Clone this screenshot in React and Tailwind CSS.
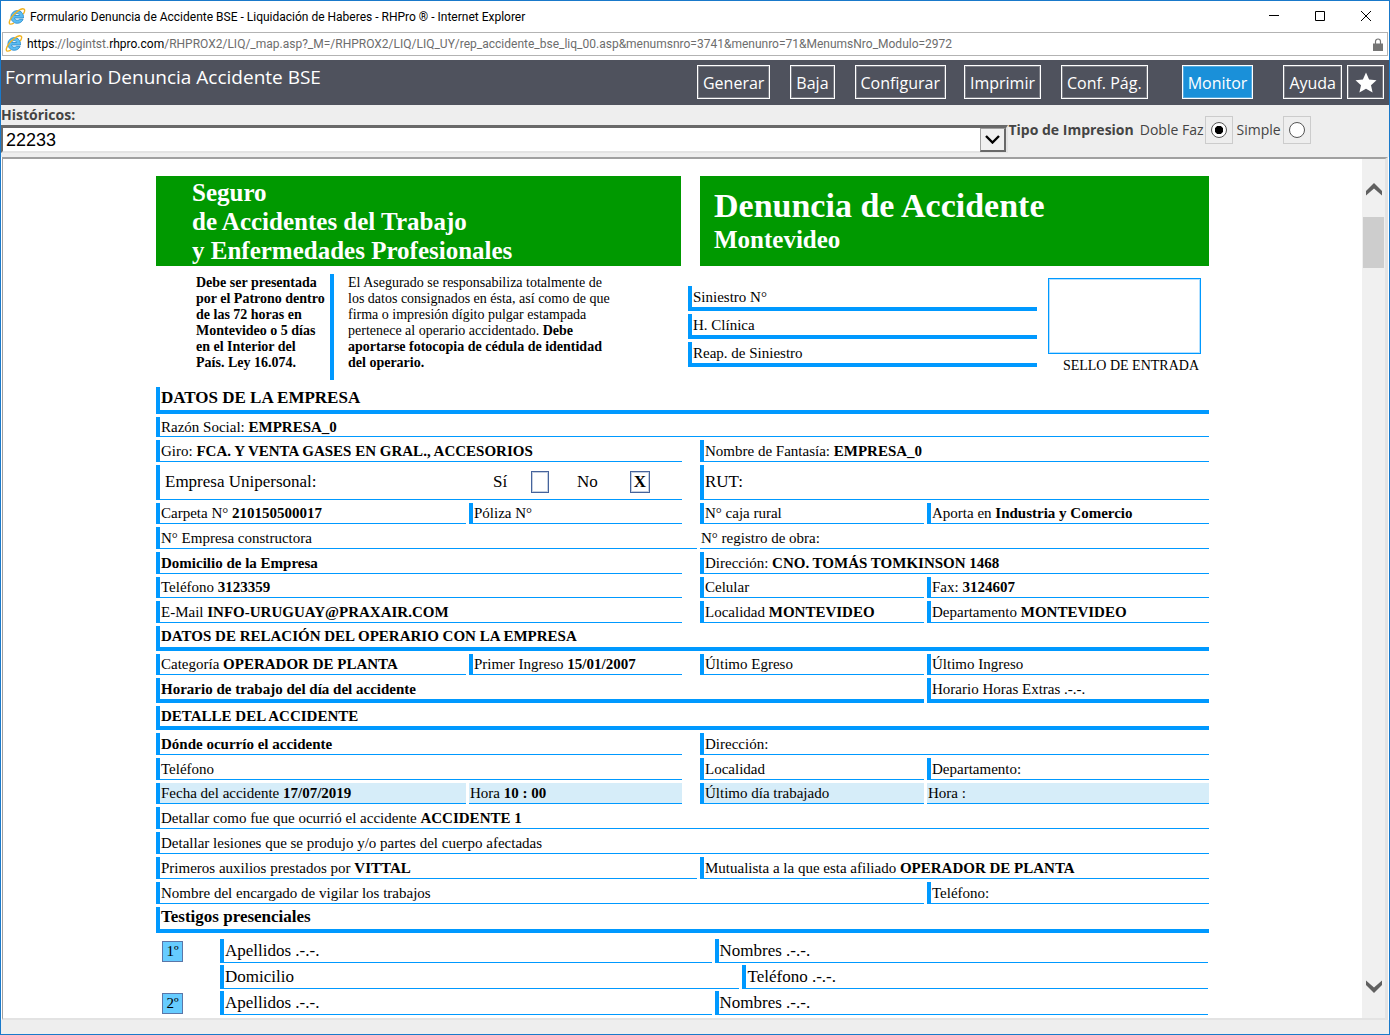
import React from "react";

const SERIF = "font-['Liberation_Serif','Times_New_Roman',serif]";
const cols = "grid grid-cols-[310fr_228fr_224fr_282fr] gap-x-[3px]";

const spans = { 1: "col-span-1", 2: "col-span-2", 3: "col-span-3", 4: "col-span-4" };

function Cell({ span = 1, inset, thick, plain, fill, className = "", children }) {
  return (
    <div
      className={`flex min-w-0 items-center whitespace-pre border-[#0099ff] ${spans[span]} ${
        inset ? "mr-[15px]" : ""
      } ${thick ? "border-b-4" : "border-b"} ${plain ? "pl-px" : "border-l-4 pl-px"} ${
        fill ? "bg-[#d6edf9]" : ""
      } ${className}`}
    >
      {children}
    </div>
  );
}

function Row({ h = "h-[22px]", children }) {
  return <div className={`${cols} ${h}`}>{children}</div>;
}

function ExplorerIcon() {
  return (
    <svg width="18" height="18" viewBox="0 0 18 18" className="shrink-0" aria-hidden="true">
      <path
        d="M9.200 2.600a6.300 6.300 0 0 0-6.300 6.500c0 3.500 2.800 6.200 6.300 6.200 2.800 0 5-1.600 5.900-4h-3.700c-.5.600-1.200.9-2.200.9-1.500 0-2.500-.8-2.600-2.200h8.900c.3-4.300-2.300-7.400-6.300-7.400zM6.700 7.500c.2-1.100 1.100-1.900 2.500-1.900s2.300.8 2.400 1.900z"
        fill="#5cbcf0"
        stroke="#2388cb"
        strokeWidth=".8"
      />
      <path
        d="M15.200 6.200c1.500-2.400 1.800-4.400.8-5.100-1.300-.8-4.200.4-7 2.700C5.500 6.600 2.300 10.500 1.500 13.400c-.8 2.900.9 3.600 4.300 1.700"
        fill="none"
        stroke="#f0b323"
        strokeWidth="1.400"
      />
    </svg>
  );
}

function ToolButton({ className = "", children, ...rest }) {
  return (
    <button
      type="button"
      className={`h-[34px] border border-white px-[5px] pt-0.5 text-base leading-none text-white outline outline-1 -outline-offset-2 outline-white/25 ${className}`}
      {...rest}
    >
      {children}
    </button>
  );
}

function MarkBox({ mark, className }) {
  return (
    <span
      className={`flex h-[22px] items-center justify-center border border-[#45639c] font-bold outline outline-1 -outline-offset-2 outline-[#c5cfe0] ${className}`}
    >
      {mark}
    </span>
  );
}

function WitnessMark({ children }) {
  return (
    <div className="ml-1.5 flex h-[21px] w-[21px] items-center justify-center self-center border border-[#5b76a8] bg-[#66ccff] text-[15px]">
      {children}
    </div>
  );
}

function WitnessRow({ mark, first, second, grid }) {
  return (
    <div className="flex h-6 pr-px text-[17px]">
      <div className="flex w-16 shrink-0">{mark && <WitnessMark>{mark}</WitnessMark>}</div>
      <div className={`grid flex-1 gap-x-[3px] ${grid}`}>
        <Cell>{first}</Cell>
        <Cell>{second}</Cell>
      </div>
    </div>
  );
}

function ClaimLine({ children }) {
  return (
    <div className="flex h-[25px] items-center border-b-4 border-l-4 border-[#0099ff] pl-px">
      {children}
    </div>
  );
}

export default function App() {
  return (
    <div className="flex h-screen flex-col overflow-hidden border border-[#1979ca] bg-white font-['Open_Sans',sans-serif]">
      <div className="flex h-[31px] shrink-0 items-center justify-between pl-[7px] font-['Roboto',sans-serif]">
        <div className="flex items-center gap-1 text-xs text-black">
          <ExplorerIcon />
          <span>Formulario Denuncia de Accidente BSE - Liquidación de Haberes - RHPro ® - Internet Explorer</span>
        </div>
        <div className="flex text-black">
          <button type="button" aria-label="Minimizar" className="flex w-[46px] justify-center">
            <svg width="12" height="12" viewBox="0 0 12 12" stroke="currentColor"><path d="M1 4.500h10" /></svg>
          </button>
          <button type="button" aria-label="Maximizar" className="flex w-[46px] justify-center">
            <svg width="12" height="12" viewBox="0 0 12 12" fill="none" stroke="currentColor"><path d="M1.500.5h9v9h-9z" /></svg>
          </button>
          <button type="button" aria-label="Cerrar" className="flex w-[46px] justify-center">
            <svg width="12" height="12" viewBox="0 0 12 12" stroke="currentColor"><path d="M1 0l10 10M11 0L1 10" /></svg>
          </button>
        </div>
      </div>

      <div className="mx-px flex h-6 shrink-0 items-center gap-1 border border-[#b3b3b3] pl-0.5 pr-1 font-['Roboto',sans-serif] text-xs text-[#6d6d6d]">
        <ExplorerIcon />
        <span className="flex-1">
          <span className="text-black">https</span>://logintst.<span className="text-black">rhpro.com</span>
          /RHPROX2/LIQ/_map.asp?_M=/RHPROX2/LIQ/LIQ_UY/rep_accidente_bse_liq_00.asp&amp;menumsnro=3741&amp;menunro=71&amp;MenumsNro_Modulo=2972
        </span>
        <svg width="10" height="13" viewBox="0 0 10 13" aria-label="Conexión segura">
          <path d="M2.500 6V3.500a2.500 2.500 0 0 1 5 0V6" fill="none" stroke="#757575" strokeWidth="1.200" />
          <path d="M0 5.500h10V13H0z" fill="#757575" />
        </svg>
      </div>

      <header className="mt-1 flex h-[45px] shrink-0 justify-between bg-[#4f525d] pl-1 text-white">
        <h1 className="pt-[3px] text-[19px] leading-7">Formulario Denuncia Accidente BSE</h1>
        <div className="flex items-start pt-[5px] pr-[5px]">
          <ToolButton>Generar</ToolButton>
          <ToolButton className="ml-5">Baja</ToolButton>
          <ToolButton className="ml-5">Configurar</ToolButton>
          <ToolButton className="ml-[18px]">Imprimir</ToolButton>
          <ToolButton className="ml-5">Conf. Pág.</ToolButton>
          <ToolButton className="ml-[34px] bg-[#1a90d9]">Monitor</ToolButton>
          <ToolButton className="ml-[30px]">Ayuda</ToolButton>
          <ToolButton className="ml-[5px] flex w-[37px] items-center justify-center" aria-label="Favoritos">
            <svg width="22" height="22" viewBox="0 0 22 22" fill="#fff" className="shrink-0">
              <path d="M11 .5l3.100 6.900 7.400.8-5.500 5 1.600 7.300L11 16.800l-6.600 3.700L6 13.200.5 8.200l7.400-.8z" />
            </svg>
          </ToolButton>
        </div>
      </header>

      <div className="flex h-[52px] shrink-0 bg-[#eeeeee] text-sm text-[#444444]">
        <div className="flex flex-[1006] flex-col">
          <label htmlFor="historicos" className="font-bold leading-5">Históricos:</label>
          <div className="relative">
            <select
              id="historicos"
              defaultValue="22233"
              className="h-7 w-full appearance-none border-2 border-t-[3px] border-[#e3e3e3] border-t-[#696969] border-l-[#696969] bg-white pl-[3px] font-['Liberation_Sans',Arial,sans-serif] text-lg leading-none text-black"
            >
              <option>22233</option>
            </select>
            <span className="pointer-events-none absolute right-0.5 top-[3px] flex h-6 w-[26px] items-center justify-center border border-[#a0a0a0] border-b-2 border-r-2 border-b-[#696969] border-r-[#696969] bg-[#f0f0f0]">
              <svg width="15" height="9" viewBox="0 0 15 9" fill="none" stroke="#000" strokeWidth="2.400"><path d="M1 1l6.500 6.500L14 1" /></svg>
            </span>
          </div>
        </div>
        <fieldset className="flex flex-[380] items-start pt-[11px] leading-7">
          <b>Tipo de Impresion</b>
          <label htmlFor="doble" className="ml-1.5 mr-px">Doble Faz</label>
          <span className="flex size-7 items-center justify-center border border-[#cccccc]">
            <input id="doble" name="tipo" type="radio" defaultChecked className="size-4 appearance-none rounded-full border border-[#555] bg-white bg-[radial-gradient(circle,#000_0_4px,#fff_4.500px)]" />
          </span>
          <label htmlFor="simple" className="ml-1 mr-0.5">Simple</label>
          <span className="flex size-7 items-center justify-center border border-[#cccccc]">
            <input id="simple" name="tipo" type="radio" className="size-4 appearance-none rounded-full border border-[#555] bg-white" />
          </span>
        </fieldset>
      </div>

      <div className="mx-px flex min-h-0 flex-1 border-2 border-r-[3px] border-[#e3e3e3] border-t-[#a0a0a0] border-l-[#a0a0a0] border-l">
        <main className={`min-w-0 flex-1 overflow-hidden bg-white pt-[17px] text-[15px] leading-4 text-black ${SERIF}`}>
          <div className="mx-auto w-full max-w-[1053px]">
            <div className="grid grid-cols-[525fr_509fr] gap-[19px] font-bold text-white">
              <div className="flex h-[90px] flex-col justify-center bg-[#009900] pl-9 text-[25px] leading-[29px]">
                <p>Seguro</p>
                <p>de Accidentes del Trabajo</p>
                <p>y Enfermedades Profesionales</p>
              </div>
              <div className="flex h-[90px] flex-col justify-center bg-[#009900] pb-0.5 pl-3.5">
                <h2 className="text-[34px] leading-10">Denuncia de Accidente</h2>
                <p className="text-[25px] leading-7">Montevideo</p>
              </div>
            </div>

            <div className="flex h-[121px] pt-2 text-sm leading-4">
              <p className="h-[106px] w-[178px] shrink-0 border-r-4 border-[#0099ff] pl-10 pt-px font-bold">
                Debe ser presentada<br />por el Patrono dentro<br />de las 72 horas en<br />Montevideo o 5 días<br />en el Interior del<br />País. Ley 16.074.
              </p>
              <p className="ml-3.5 flex-1 whitespace-nowrap pt-px">
                El Asegurado se responsabiliza totalmente de<br />los datos consignados en ésta, así como de que<br />firma o impresión dígito pulgar estampada<br />pertenece al operario accidentado. <b>Debe<br />aportarse fotocopia de cédula de identidad<br />del operario.</b>
              </p>
              <div className="mt-3 flex w-[349px] shrink-0 flex-col gap-[3px] text-[15px]">
                <ClaimLine>Siniestro N°</ClaimLine>
                <ClaimLine>H. Clínica</ClaimLine>
                <ClaimLine>Reap. de Siniestro</ClaimLine>
              </div>
              <div className="ml-[11px] mr-2 mt-1 w-[153px] shrink-0">
                <div className="h-[76px] border border-[#0099ff] outline outline-1 -outline-offset-2 outline-[#b3e0ff]" />
                <p className="pr-0.5 pt-1 text-right">SELLO DE ENTRADA</p>
              </div>
            </div>

            <div className="flex flex-col gap-[3px]">
              <Row h="h-[27px]"><Cell span={4} thick className="pb-0.5 text-[17px] font-bold">DATOS DE LA EMPRESA</Cell></Row>
              <Row h="h-5"><Cell span={4}>Razón Social: <b>EMPRESA_0</b></Cell></Row>
              <Row>
                <Cell span={2} inset>Giro: <b>FCA. Y VENTA GASES EN GRAL., ACCESORIOS</b></Cell>
                <Cell span={2}>Nombre de Fantasía: <b>EMPRESA_0</b></Cell>
              </Row>
              <Row h="h-[35px]">
                <Cell span={2} inset className="text-[17px]">
                  <span className="flex-1 pl-1">Empresa Unipersonal:</span>
                  <span className="w-[38px]">Sí</span>
                  <MarkBox className="w-[18px]" />
                  <span className="ml-7 w-[53px]">No</span>
                  <MarkBox mark="X" className="mr-8 w-5" />
                </Cell>
                <Cell span={2} className="text-[17px]">RUT:</Cell>
              </Row>
              <Row h="h-[21px]">
                <Cell>Carpeta N° <b>210150500017</b></Cell>
                <Cell inset>Póliza N°</Cell>
                <Cell>N° caja rural</Cell>
                <Cell>Aporta en <b>Industria y Comercio</b></Cell>
              </Row>
              <Row><Cell span={2}>N° Empresa constructora</Cell><Cell span={2} plain>N° registro de obra:</Cell></Row>
              <Row>
                <Cell span={2} inset><b>Domicilio de la Empresa</b></Cell>
                <Cell span={2}>Dirección: <b>CNO. TOMÁS TOMKINSON 1468</b></Cell>
              </Row>
              <Row h="h-[21px]">
                <Cell span={2} inset>Teléfono <b>3123359</b></Cell>
                <Cell>Celular</Cell>
                <Cell>Fax: <b>3124607</b></Cell>
              </Row>
              <Row>
                <Cell span={2} inset>E-Mail <b>INFO-URUGUAY@PRAXAIR.COM</b></Cell>
                <Cell>Localidad <b>MONTEVIDEO</b></Cell>
                <Cell>Departamento <b>MONTEVIDEO</b></Cell>
              </Row>
              <Row h="h-[25px]"><Cell span={4} thick className="pb-0.5"><b>DATOS DE RELACIÓN DEL OPERARIO CON LA EMPRESA</b></Cell></Row>
              <Row h="h-[21px]">
                <Cell>Categoría <b>OPERADOR DE PLANTA</b></Cell>
                <Cell inset>Primer Ingreso <b>15/01/2007</b></Cell>
                <Cell>Último Egreso</Cell>
                <Cell>Último Ingreso</Cell>
              </Row>
              <Row h="h-[25px]">
                <Cell span={3} thick><b>Horario de trabajo del día del accidente</b></Cell>
                <Cell thick>Horario Horas Extras .-.-.</Cell>
              </Row>
              <Row h="h-6"><Cell span={4} thick><b>DETALLE DEL ACCIDENTE</b></Cell></Row>
              <Row><Cell span={2} inset><b>Dónde ocurrío el accidente</b></Cell><Cell span={2}>Dirección:</Cell></Row>
              <Row><Cell span={2} inset>Teléfono</Cell><Cell>Localidad</Cell><Cell>Departamento:</Cell></Row>
              <Row h="h-[21px]">
                <Cell fill>Fecha del accidente <b>17/07/2019</b></Cell>
                <Cell fill plain inset>Hora <b>10 : 00</b></Cell>
                <Cell fill>Último día trabajado</Cell>
                <Cell fill plain>Hora :</Cell>
              </Row>
              <Row><Cell span={4}>Detallar como fue que ocurrió el accidente <b>ACCIDENTE 1</b></Cell></Row>
              <Row><Cell span={4}>Detallar lesiones que se produjo y/o partes del cuerpo afectadas</Cell></Row>
              <Row>
                <Cell span={2}>Primeros auxilios prestados por <b>VITTAL</b></Cell>
                <Cell span={2}>Mutualista a la que esta afiliado <b>OPERADOR DE PLANTA</b></Cell>
              </Row>
              <Row><Cell span={3}>Nombre del encargado de vigilar los trabajos</Cell><Cell>Teléfono:</Cell></Row>
              <Row h="h-[26px]"><Cell span={4} thick className="pb-0.5 text-[17px] font-bold">Testigos presenciales</Cell></Row>
            </div>

            <div className="flex flex-col gap-0.5 pt-1.5">
              <WitnessRow mark="1º" first="Apellidos .-.-." second="Nombres .-.-." grid="grid-cols-[492fr_494fr]" />
              <WitnessRow first="Domicilio" second="Teléfono .-.-." grid="grid-cols-[520fr_466fr]" />
              <WitnessRow mark="2º" first="Apellidos .-.-." second="Nombres .-.-." grid="grid-cols-[492fr_494fr]" />
            </div>
          </div>
        </main>
        <div className="flex w-[23px] shrink-0 flex-col items-center justify-between bg-[#f0f0f0] pb-[25px] pt-6" aria-hidden="true">
          <div className="flex w-full flex-col items-center gap-[21px]">
            <svg width="18" height="13" viewBox="0 0 18 13" fill="#606060"><path d="M9 0l8 8v4.500L9 5.500l-8 7V8z" /></svg>
            <div className="h-[51px] w-[21px] bg-[#cdcdcd]" />
          </div>
          <svg width="18" height="13" viewBox="0 0 18 13" fill="#606060"><path d="M9 13L1 5V.5l8 7 8-7V5z" /></svg>
        </div>
      </div>
      <div className="h-[14px] shrink-0 bg-[#eeeeee]" />
    </div>
  );
}
